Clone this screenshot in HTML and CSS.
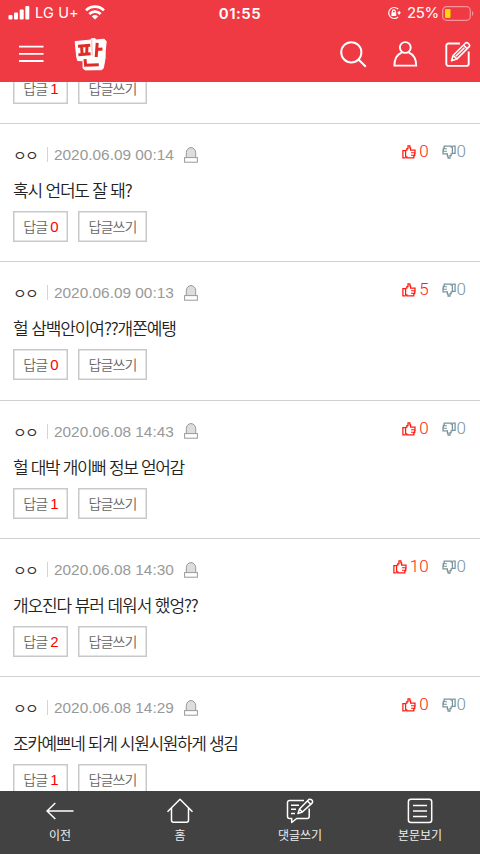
FILE: index.html
```html
<!DOCTYPE html>
<html lang="ko">
<head>
<meta charset="utf-8">
<title>판</title>
<link rel="stylesheet" href="styles.css">
</head>
<body>
<svg class="defs" width="0" height="0">
  <symbol id="bell" viewBox="0 0 14 16"><path d="M2.3 10.5V5.6a4.7 5 0 0 1 9.4 0v4.9" fill="#ddd" stroke="#999"/><rect x=".6" y="10.6" width="12.8" height="4.6" fill="#fff" stroke="#999"/></symbol>
  <symbol id="up" viewBox="0 0 14 14"><path d="M3.6 5.6H.9v7.2h2.7M3.6 5.6v6.2h1.2v1.1h7v-2.2h.9V8.6h.3V5.2H8.6V2.8H7.9V.9H6v2.6H4.9v1.6H3.6" fill="none" stroke="currentColor" stroke-width="1.25"/><path d="M9 7.8h4M9 10.2h4" fill="none" stroke="currentColor" stroke-width="1.1"/></symbol>
  <symbol id="down" viewBox="0 0 14 14"><path d="M10.4 8.4h2.7V1.2h-2.7M10.4 8.4V2.2H9.2V1.1h-7v2.2h-.9v2.1H1v3.4h4.4v2.4h.7v1.9H8v-2.6h1.1V8.9h1.3" fill="none" stroke="currentColor" stroke-width="1.25"/><path d="M1 3.8h4M1 6.2h4" fill="none" stroke="currentColor" stroke-width="1.1"/></symbol>
</svg>
<div class="screen">
  <header class="top">
    <div class="status">
      <div class="carrier">
        <svg width="23" height="15" viewBox="0 0 23 15" fill="#fff"><rect x=".5" y="10" width="4" height="4.5" rx="1"/><rect x="6" y="7.5" width="4" height="7" rx="1"/><rect x="11.7" y="4.5" width="4" height="10" rx="1"/><rect x="17.3" y="1" width="4" height="13.5" rx="1"/></svg>
        <span>LG U+</span>
        <svg class="wifi" width="20" height="15" viewBox="0 0 20 15" fill="none" stroke="#fff" stroke-width="2.6"><path d="M1 5.4a12.7 12.7 0 0 1 18 0M4.3 9a8 8 0 0 1 11.4 0"/><path d="M10 14.6 6.8 11.4a4.5 4.5 0 0 1 6.4 0z" fill="#fff" stroke="none"/></svg>
      </div>
      <div class="clock">01:55</div>
      <div class="power">
        <svg width="14" height="14" viewBox="0 0 14 14" fill="none" stroke="#fff" stroke-width="1.2"><path d="M11.2 3.2A5.5 5.5 0 1 0 11.2 10.8"/><path d="M12.2 5v3"/><path d="M10.2 6.3h3.8L12.1 9z" fill="#fff" stroke="none"/><rect x="4.4" y="6.3" width="4.8" height="3.8" rx=".5" fill="#fff" stroke="none"/><path d="M5.4 6.5V5.3a1.4 1.4 0 0 1 2.8 0v1.2"/></svg>
        <span>25%</span>
        <svg width="32" height="15" viewBox="0 0 32 15"><rect x=".7" y=".7" width="27.6" height="13.6" rx="3.8" fill="none" stroke="#f8949a" stroke-width="1.2"/><rect x="3" y="3" width="5.5" height="9" rx="1.3" fill="#ffd60a"/><path d="M30 5v5q1.3-.8 1.3-2.5T30 5z" fill="#f8949a"/></svg>
      </div>
    </div>
    <nav class="bar">
      <svg class="menu" width="25" height="18" viewBox="0 0 25 18" stroke="#fff" stroke-width="1.8"><path d="M0 1.6h24.5M0 8.8h24.5M0 16h24.5"/></svg>
      <svg class="logo" width="34" height="33" viewBox="0 0 34 33"><path d="M1.2 3.6 16.8 2l.6-1.3h3.8L22.4 2l7.8-.8 2 2.2-1 10-.1 7-1.8 9.7-1.5 1.6-16.5.2-2.3-1.6L9 22.8l-5.4-.3L2.6 18z" fill="#fff" stroke="#fff" stroke-linejoin="round"/><path d="M17.7 1.5l.5 16" stroke="#f6a5a3" stroke-width=".8"/><path d="M4 8.2l12.2-.9M7.6 8l.4 7.5M13 7.8l-.3 7.5M4.4 16.8l12.2-1.1M23.2 4.8l-1 14.2M23 11.5l5.5-.5M11 21.2l.6 6 13.2-.5" fill="none" stroke="#df2b24" stroke-width="3"/></svg>
      <svg class="search" width="27" height="27" viewBox="0 0 27 27" fill="none" stroke="#fff" stroke-width="2"><circle cx="11.3" cy="11.3" r="10.1"/><path d="m18.5 18.5 7.3 7.3"/></svg>
      <svg class="user" width="25" height="26" viewBox="0 0 25 26" fill="none" stroke="#fff" stroke-width="1.9"><circle cx="12.3" cy="6.5" r="5.4"/><path d="M9 11.4C5 13.1 1.4 17.3 1.4 24.6h21.8c0-7.3-3.6-11.5-7.6-13.2"/></svg>
      <svg class="write" width="26" height="26" viewBox="0 0 26 26" fill="none" stroke="#fff" stroke-width="1.9" stroke-linejoin="round"><path d="M15 2.5H3.5A2.2 2.2 0 0 0 1.3 4.7v18a2.2 2.2 0 0 0 2.2 2.2h18a2.2 2.2 0 0 0 2.2-2.2V10.5"/><path d="m6.5 19.8 1.6-5.3L20.3 2.2a2 2 0 0 1 2.7 0l1 1a2 2 0 0 1 0 2.7L11.8 18.1zM18.5 4l3.7 3.7M8.4 14.6l3.2 3.2M10.8 15.3l8.6-8.6" stroke-width="1.6"/></svg>
    </nav>
  </header>
  <main class="list" id="list"></main>
  <footer class="tabs">
    <a class="tab"><svg width="28" height="26" viewBox="0 0 28 26" fill="none" stroke="#fff" stroke-width="1.5"><path d="M27.5 13H1M9.3 5 1 13l8.3 8"/></svg><span>이전</span></a>
    <a class="tab"><svg width="28" height="26" viewBox="0 0 28 26" fill="none" stroke="#fff" stroke-width="1.5" stroke-linejoin="round"><path d="M1.5 13.7 14 1.2l12.5 12.5M5.5 10v12.2a2 2 0 0 0 2 2h13a2 2 0 0 0 2-2V10"/></svg><span>홈</span></a>
    <a class="tab"><svg width="28" height="26" viewBox="0 0 28 26" fill="none" stroke="#fff" stroke-width="1.5" stroke-linejoin="round"><path d="M18 2.5H3.5a2 2 0 0 0-2 2v14a2 2 0 0 0 2 2h2.2v4l5-4h10.5a2 2 0 0 0 2-2v-8"/><path d="m12 15.6 1.5-4.5L22.8 1.5q1.6-.9 3 .6t.3 3L16.3 14zM13.5 11.1l2.8 2.9M21.5 3l2.9 3M5 7.2h8M5 11.3h5M5 15.4h4"/></svg><span>댓글쓰기</span></a>
    <a class="tab"><svg width="28" height="26" viewBox="0 0 28 26" fill="none" stroke="#fff" stroke-width="1.5"><rect x="2.4" y="1.3" width="23.3" height="23.3" rx="2.5"/><path d="M7 7.5h14M7 13h14M7 18.5h14"/></svg><span>본문보기</span></a>
  </footer>
</div>
<script src="app.js"></script>
</body>
</html>
```
FILE: styles.css
```css
* { box-sizing: border-box; }
body { margin: 0; background: #fff; font-family: "Noto Sans CJK KR", sans-serif; }
.defs { display: block; position: absolute; }
svg { display: block; flex: none; }
.screen { width: 480px; height: 854px; overflow: hidden; display: flex; flex-direction: column; }
.top { height: 82px; flex: none; background: #ef3a44; color: #fff; border-bottom: 1px solid #d9434b; }
.status { height: 27px; display: grid; grid-template-columns: 1fr auto 1fr; align-items: center; font: 15px/20px Inter, sans-serif; }
.carrier { display: flex; align-items: center; padding: 0 0 2px 8px; }
.carrier span { margin-left: 4px; font-size: 14.5px; letter-spacing: .15px; }
.wifi { margin-left: 6px; }
.clock { font-weight: 600; font-size: 15px; letter-spacing: .5px; }
.power { display: flex; align-items: center; justify-content: flex-end; padding: 0 6px 1px 0; }
.power span { margin: 0 3px 0 6px; letter-spacing: -.3px; }
.bar { height: 54px; display: flex; align-items: center; padding-left: 19px; }
.logo { margin-left: 30px; }
.search { margin-left: 232px; }
.user { margin-left: 26px; }
.write { margin-left: 27px; }
.list { height: 709px; flex: none; overflow: hidden; }
.comment { height: 138.3px; border-top: 1.3px solid #d0d0d0; padding: 20px 13px 0; }
.comment:first-child { margin-top: -97.2px; }
.meta { display: flex; align-items: center; height: 21px; }
.name { width: 34px; font-size: 15px; line-height: 21px; color: #333; letter-spacing: -1.8px; }
.date { border-left: 1px solid #d4d4d4; padding-left: 6px; line-height: 15px; font-family: "Liberation Sans", sans-serif; font-size: 15.4px; color: #999; white-space: nowrap; }
.bell { margin-left: 10px; }
.votes { margin-left: auto; display: flex; align-items: center; font: 300 17px/20px Roboto, sans-serif; position: relative; top: -3.5px; left: -1px; }
.votes span { display: flex; align-items: center; gap: 3px; }
.votes svg { position: relative; top: 1px; }
.votes b { font-weight: 300; }
.good { color: #ff1a12; }
.bad { color: #78929b; margin-left: 13px; }
.bad.bad { gap: 1px; }
.text { margin: 13px 0 0; height: 24px; font-size: 17px; line-height: 24px; letter-spacing: -1.35px; font-weight: 350; color: #222; white-space: nowrap; }
.actions { display: flex; gap: 10px; margin-top: 9px; }
.btn { height: 31px; box-shadow: inset 0 0 0 1.5px #c9c9c9; font-size: 14px; line-height: 31px; font-weight: 350; letter-spacing: -.9px; color: #666; text-align: center; white-space: nowrap; }
.count { width: 55px; }
.reply { width: 69px; }
.count b { font: 15px/20px "Liberation Sans", sans-serif; color: #f00; margin-left: 3px; }
.tabs { height: 63px; flex: none; background: #424242; display: grid; grid-template-columns: repeat(4, 120px); color: #eee; padding-top: 7px; }
.tab { display: flex; flex-direction: column; align-items: center; font-size: 12px; line-height: 18px; }
.tab span { margin-top: 2px; }
```
FILE: app.js
```js
const comments = [
  ["2020.06.09 00:15", "", 1, 0],
  ["2020.06.09 00:14", "혹시 언더도 잘 돼?", 0, 0, -1.2],
  ["2020.06.09 00:13", "헐 삼백안이여??개쫀예탱", 0, 5, -1.1],
  ["2020.06.08 14:43", "헐 대박 개이뻐 정보 얻어감", 1, 0],
  ["2020.06.08 14:30", "개오진다 뷰러 데워서 했엉??", 2, 10, -1.1],
  ["2020.06.08 14:29", "조카예쁘네 되게 시원시원하게 생김", 1, 0]
];
document.getElementById("list").innerHTML = comments.map(([date, text, replies, likes, spacing = -1.35]) => `
<article class="comment">
  <div class="meta"><span class="name">ㅇㅇ</span><span class="date">${date}</span><svg class="bell" width="14" height="16"><use href="#bell"/></svg>
    <div class="votes"><span class="good"><svg width="14" height="14"><use href="#up"/></svg><b>${likes}</b></span><span class="bad"><svg width="14" height="14"><use href="#down"/></svg><b>0</b></span></div></div>
  <p class="text" style="letter-spacing:${spacing}px">${text}</p>
  <div class="actions"><div class="btn count">답글<b>${replies}</b></div><div class="btn reply">답글쓰기</div></div>
</article>`).join("");
```
